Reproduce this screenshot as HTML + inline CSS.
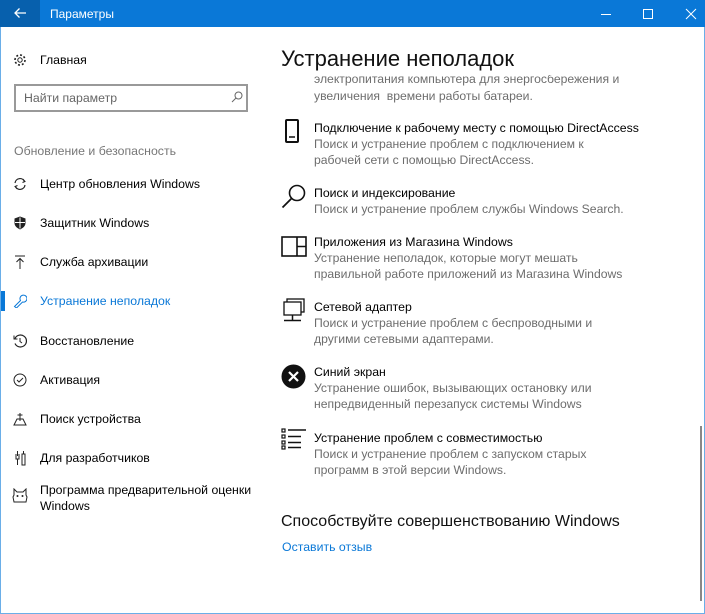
<!DOCTYPE html>
<html><head><meta charset="utf-8"><style>
*{margin:0;padding:0;box-sizing:border-box}
body{width:705px;height:614px;overflow:hidden;background:#fff;font-family:"Liberation Sans","DejaVu Sans",sans-serif;position:relative;color:#000}
.a{position:absolute;white-space:nowrap}
.t{font-size:12.3px;color:#000}
.d{font-size:12.2px;color:#6d6d6d}
.n{font-size:12.3px;color:#000;left:40px}
svg{position:absolute}
</style></head><body>
<div class="a" style="left:0;top:0;width:705px;height:27px;background:#0a78d7"></div>
<div class="a" style="left:0;top:0;width:40px;height:27px;background:#0760ad"></div>
<svg style="left:13px;top:7px" width="14" height="12" viewBox="0 0 14 12"><path d="M13 6H2M6.5 1.5L2 6l4.5 4.5" stroke="#fff" stroke-width="1.3" fill="none"/></svg>
<div class="a" style="left:50px;top:7px;font-size:12px;color:#fff">Параметры</div>
<svg style="left:600px;top:8px" width="100" height="12"><path d="M1 6.5h10" stroke="#fff"/><rect x="43.5" y="1.5" width="9" height="9" stroke="#fff" fill="none"/><path d="M86 1l10 10M96 1l-10 10" stroke="#fff"/></svg>
<div class="a" style="left:0;top:27px;width:1px;height:587px;background:#6aaee8"></div>
<div class="a" style="left:704px;top:27px;width:1px;height:587px;background:#6aaee8"></div>
<div class="a" style="left:0;top:613px;width:705px;height:1px;background:#6aaee8"></div>

<svg style="left:13px;top:53px" width="14" height="14" viewBox="0 0 14 14"><circle cx="7" cy="7" r="2.2" fill="none" stroke="#222" stroke-width="1"/><circle cx="7" cy="7" r="5" fill="none" stroke="#222" stroke-width="1.6" stroke-dasharray="2 1.9"/></svg>
<div class="a n" style="top:53px">Главная</div>
<div class="a" style="left:14px;top:84px;width:234px;height:28px;border:2px solid #999"></div>
<div class="a" style="left:24px;top:91px;font-size:12.3px;color:#666">Найти параметр</div>
<svg style="left:231px;top:91px" width="12" height="12"><circle cx="7.5" cy="4.5" r="3.5" fill="none" stroke="#666"/><path d="M5 7L1 11" stroke="#666"/></svg>
<div class="a" style="left:14px;top:144px;font-size:12.3px;color:#777">Обновление и безопасность</div>

<svg style="left:13px;top:177px" width="14" height="14"><path d="M2 6A5 5 0 0 1 11.5 4.5M12 8A5 5 0 0 1 2.5 9.5" stroke="#222" stroke-width="1.2" fill="none"/><path d="M10 2l2 2.5-2.5 1M4 12l-2-2.5 2.5-1" stroke="#222" fill="none"/></svg>
<div class="a n" style="top:177px">Центр обновления Windows</div>
<svg style="left:14px;top:216px" width="12" height="14"><path d="M6 0.5L11.5 2.5V7c0 3-2.5 5-5.5 6.5C3 12 0.5 10 0.5 7V2.5z" fill="#222"/><path d="M6 1.5v11M1 6.5h10" stroke="#fff"/></svg>
<div class="a n" style="top:216px">Защитник Windows</div>
<svg style="left:14px;top:255px" width="12" height="14"><path d="M1 1h10M6 3v11M2.5 7L6 3.5 9.5 7" stroke="#222" fill="none"/></svg>
<div class="a n" style="top:255px">Служба архивации</div>
<div class="a" style="left:1px;top:291px;width:4px;height:20px;background:#0a78d7"></div>
<svg style="left:13px;top:294px" width="14" height="14"><path d="M1.5 12.5l6-6a3.5 3.5 0 1 1 2 1.5l-6 6z" fill="none" stroke="#0a78d7"/></svg>
<div class="a n" style="top:294px;color:#0a78d7">Устранение неполадок</div>
<svg style="left:13px;top:334px" width="14" height="14"><path d="M2 4.5A6 6 0 1 1 2 9.5" fill="none" stroke="#222" stroke-width="1.2"/><path d="M1 1.5v3.5h3.5M7 4v3.5l2 1.5" fill="none" stroke="#222"/></svg>
<div class="a n" style="top:334px">Восстановление</div>
<svg style="left:13px;top:373px" width="14" height="14"><circle cx="7" cy="7" r="6" fill="none" stroke="#222"/><path d="M4 7l2 2 4-4" fill="none" stroke="#222"/></svg>
<div class="a n" style="top:373px">Активация</div>
<svg style="left:13px;top:412px" width="14" height="14"><path d="M7 1v8M4.5 3h5M1 13l3-6h6l3 6z" fill="none" stroke="#222"/></svg>
<div class="a n" style="top:412px">Поиск устройства</div>
<svg style="left:15px;top:451px" width="12" height="15"><path d="M2.5 0v5M1 3v5h3V3M2.5 8v6M8.5 0v3M7 3h3v11H7z" fill="none" stroke="#222"/></svg>
<div class="a n" style="top:451px">Для разработчиков</div>
<svg style="left:12px;top:488px" width="16" height="16"><path d="M2 1l3 3h6l3-3v6l1 2-1 5H2L1 9l1-2z" fill="none" stroke="#222"/><circle cx="5.5" cy="8" r="1" fill="#222"/><circle cx="10.5" cy="8" r="1" fill="#222"/></svg>
<div class="a n" style="top:483px">Программа предварительной оценки</div>
<div class="a n" style="top:499px">Windows</div>

<div class="a d" style="left:314px;top:72px">электропитания компьютера для энергосбережения и</div>
<div class="a d" style="left:314px;top:89px">увеличения&nbsp; времени работы батареи.</div>
<div class="a" style="left:271px;top:27px;width:420px;height:48px;background:#fff"></div>
<div class="a" style="left:281px;top:46px;font-size:22px;color:#111">Устранение неполадок</div>

<svg style="left:284px;top:118px" width="16" height="26"><rect x="2" y="2" width="12" height="22" rx="1" fill="none" stroke="#111" stroke-width="2"/><path d="M5 19h6" stroke="#111" stroke-width="1.5"/></svg>
<div class="a t" style="left:314px;top:121px">Подключение к рабочему месту с помощью DirectAccess</div>
<div class="a d" style="left:314px;top:137px">Поиск и устранение проблем с подключением к</div>
<div class="a d" style="left:314px;top:153px">рабочей сети с помощью DirectAccess.</div>

<svg style="left:281px;top:184px" width="26" height="26"><circle cx="16" cy="9" r="7.5" fill="none" stroke="#111" stroke-width="1.6"/><path d="M10.5 14.5L1.5 23.5" stroke="#111" stroke-width="1.8"/></svg>
<div class="a t" style="left:314px;top:186px">Поиск и индексирование</div>
<div class="a d" style="left:314px;top:202px">Поиск и устранение проблем службы Windows Search.</div>

<svg style="left:281px;top:236px" width="26" height="22"><rect x="1" y="1" width="24" height="19" fill="none" stroke="#111" stroke-width="1.6"/><path d="M16 1v19M16 10.5h9" stroke="#111" stroke-width="1.6"/></svg>
<div class="a t" style="left:314px;top:235px">Приложения из Магазина Windows</div>
<div class="a d" style="left:314px;top:251px">Устранение неполадок, которые могут мешать</div>
<div class="a d" style="left:314px;top:267px">правильной работе приложений из Магазина Windows</div>

<svg style="left:281px;top:298px" width="26" height="26"><rect x="6" y="1" width="17" height="13" fill="#fff" stroke="#111" stroke-width="1.3"/><rect x="3" y="4" width="17" height="13" fill="#fff" stroke="#111" stroke-width="1.3"/><path d="M11.5 17v5M3 22.5h17" stroke="#111" stroke-width="1.5"/></svg>
<div class="a t" style="left:314px;top:300px">Сетевой адаптер</div>
<div class="a d" style="left:314px;top:316px">Поиск и устранение проблем с беспроводными и</div>
<div class="a d" style="left:314px;top:332px">другими сетевыми адаптерами.</div>

<svg style="left:281px;top:364px" width="25" height="25"><circle cx="12.5" cy="12.5" r="12" fill="#111"/><path d="M8 8l9 9M17 8l-9 9" stroke="#fff" stroke-width="2.2"/></svg>
<div class="a t" style="left:314px;top:365px">Синий экран</div>
<div class="a d" style="left:314px;top:381px">Устранение ошибок, вызывающих остановку или</div>
<div class="a d" style="left:314px;top:397px">непредвиденный перезапуск системы Windows</div>

<svg style="left:281px;top:428px" width="26" height="22"><g fill="none" stroke="#111" stroke-width="1.2"><rect x="1" y="1" width="3" height="3"/><rect x="1" y="7" width="3" height="3"/><rect x="1" y="13" width="3" height="3"/><rect x="1" y="18" width="3" height="3"/></g><path d="M7 2h18M7 8.5h13M7 14.5h13M7 19.5h13" stroke="#111" stroke-width="1.5"/></svg>
<div class="a t" style="left:314px;top:431px">Устранение проблем с совместимостью</div>
<div class="a d" style="left:314px;top:447px">Поиск и устранение проблем с запуском старых</div>
<div class="a d" style="left:314px;top:463px">программ в этой версии Windows.</div>

<div class="a" style="left:281px;top:513px;font-size:16px;color:#111">Способствуйте совершенствованию Windows</div>
<div class="a" style="left:282px;top:540px;font-size:12.3px;color:#0a78d7">Оставить отзыв</div>

<div class="a" style="left:700px;top:426px;width:2px;height:175px;background:#888"></div>
</body></html>
